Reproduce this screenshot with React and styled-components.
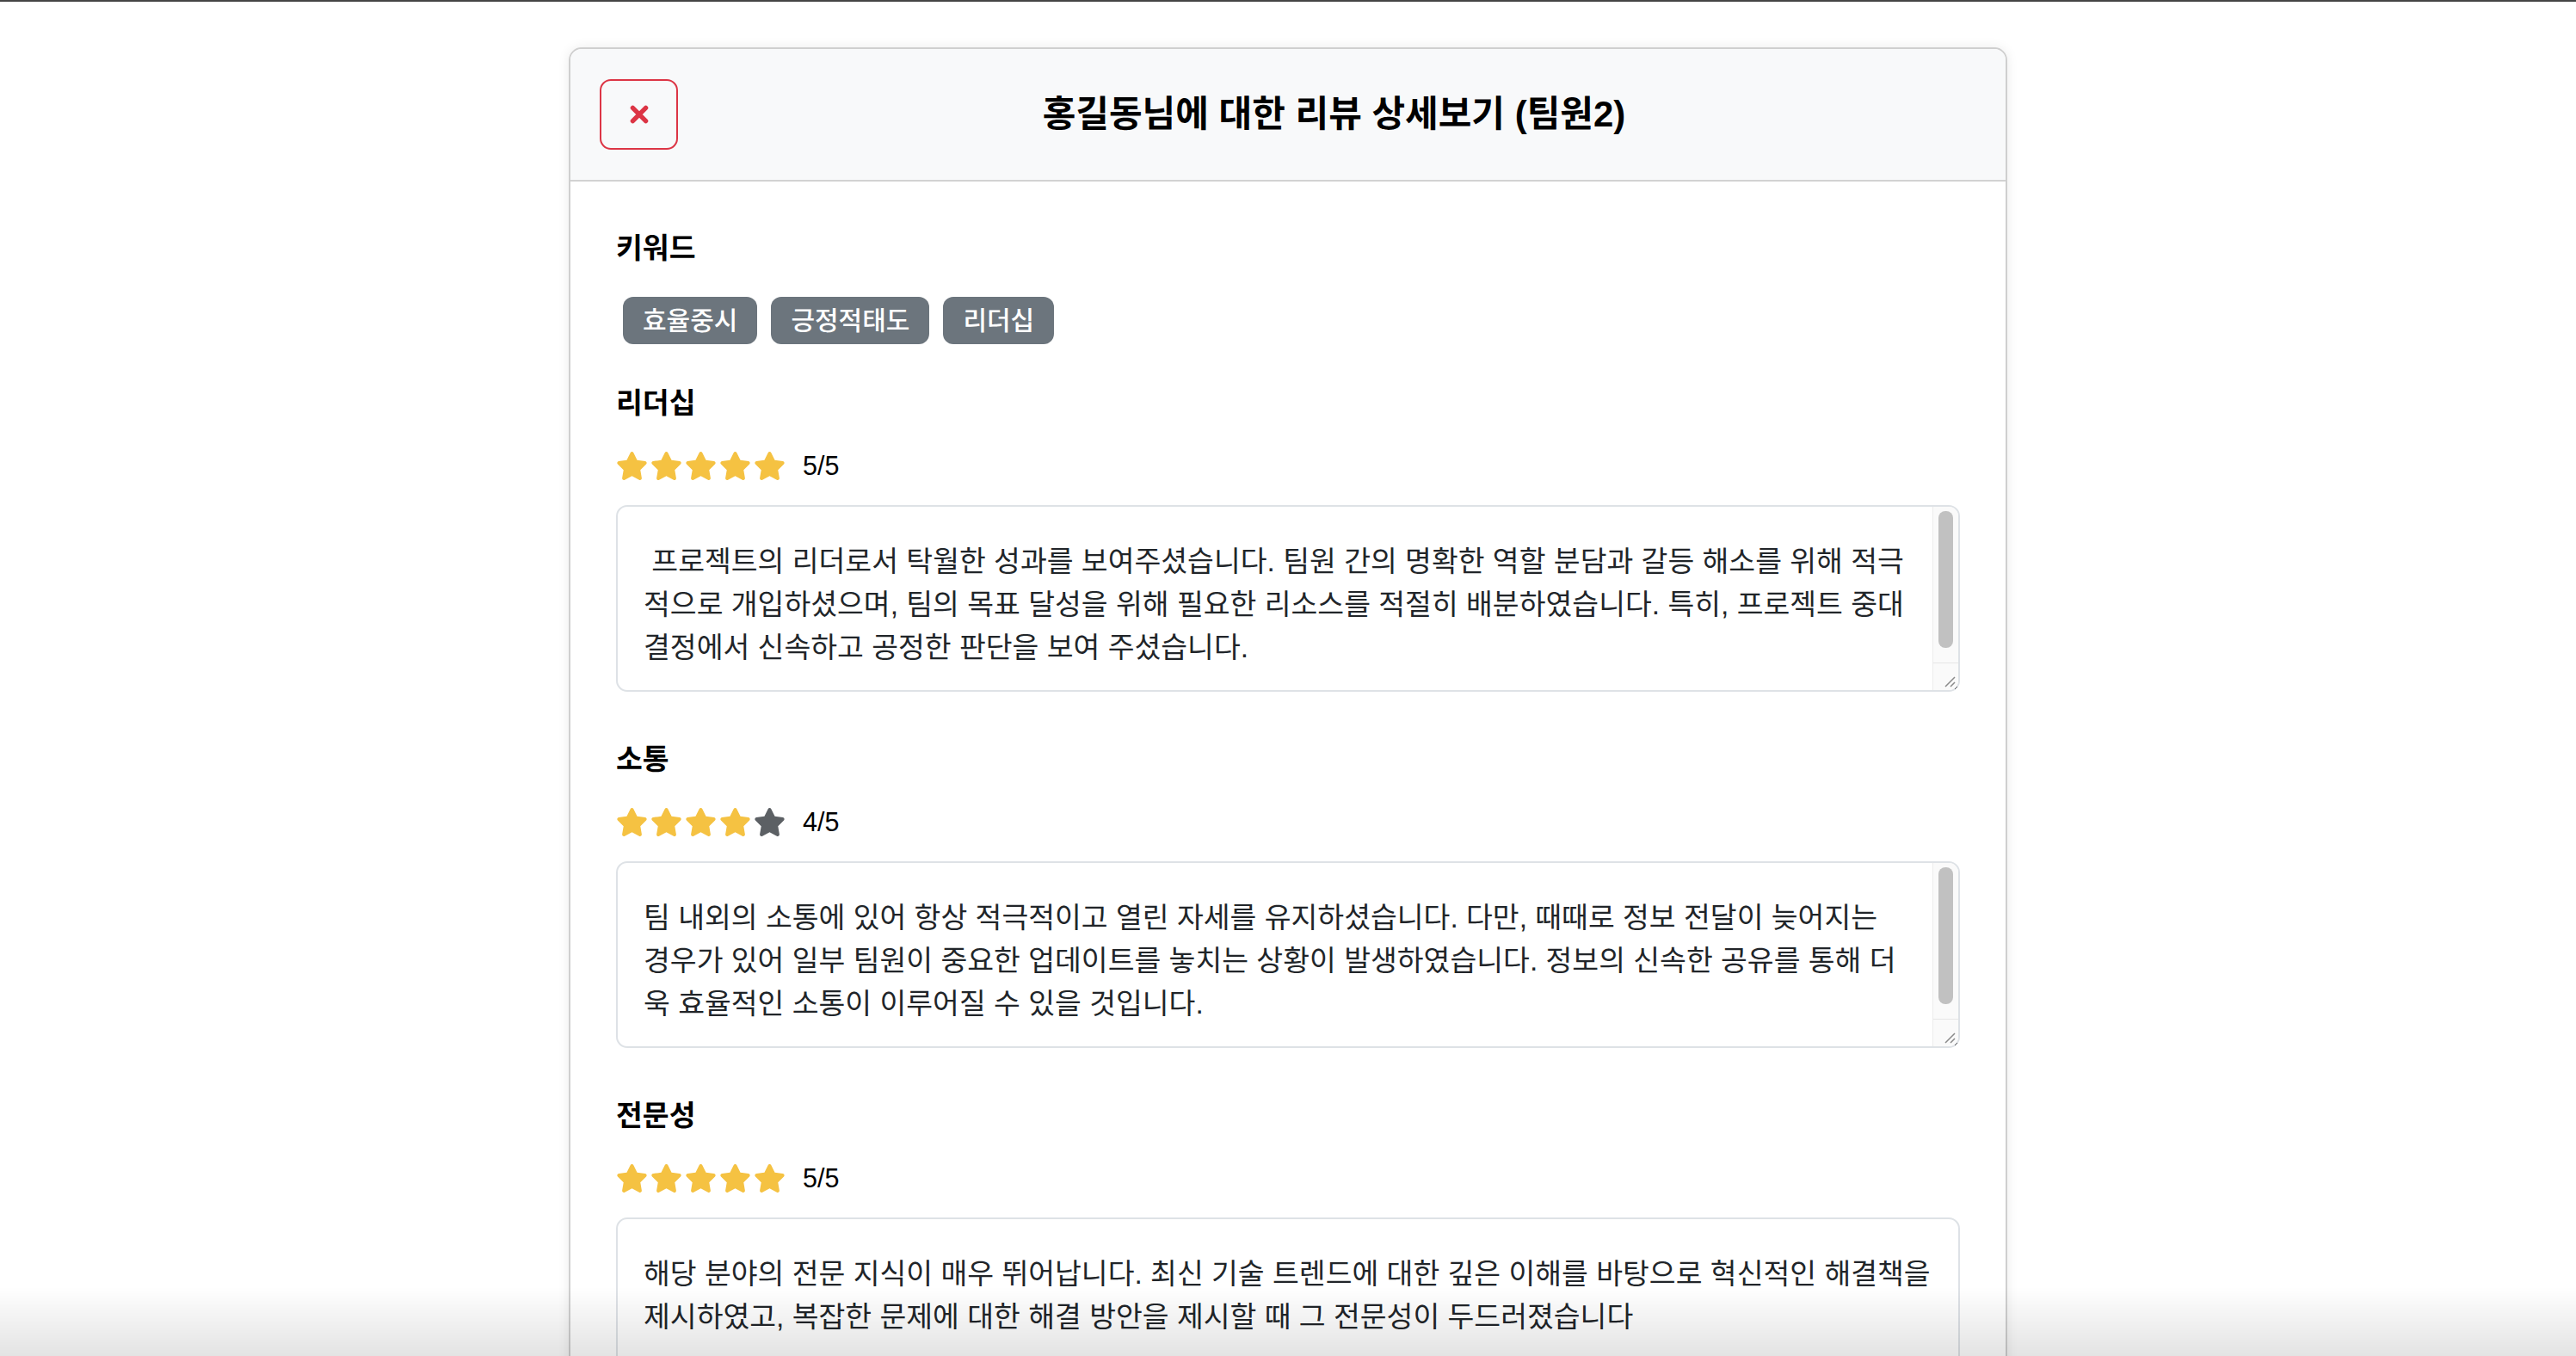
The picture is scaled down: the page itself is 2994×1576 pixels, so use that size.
import React from 'react';
import styled, { createGlobalStyle } from 'styled-components';
import { FaStar } from 'react-icons/fa';

const GlobalStyle = createGlobalStyle`
  html, body {
    margin: 0;
    padding: 0;
    background: #fff;
  }
  body {
    font-family: "Liberation Sans", "Noto Sans CJK KR", sans-serif;
    color: #212529;
    border-top: 2px solid #454545;
  }
`;

const Page = styled.div`
  display: flex;
  justify-content: center;
  padding-top: 53px;
`;

const Modal = styled.div`
  width: 1672px;
  box-sizing: border-box;
  border: 2px solid #cfcfcf;
  border-radius: 15px;
  background: #fff;
  box-shadow: 0 0 14px rgba(0, 0, 0, 0.08);
  overflow: hidden;
`;

const Header = styled.div`
  display: flex;
  align-items: center;
  padding: 35px 34px;
  background: #f8f9fa;
  border-bottom: 2px solid #d2d2d2;
`;

const CloseButton = styled.button`
  width: 91px;
  height: 82px;
  box-sizing: border-box;
  display: flex;
  align-items: center;
  justify-content: center;
  border: 2px solid #dc3545;
  border-radius: 13px;
  background: transparent;
  cursor: pointer;
  padding: 0;
`;

const Title = styled.h5`
  flex: 1;
  margin: 0;
  padding-left: 16px;
  text-align: center;
  font-size: 42px;
  font-weight: 700;
  line-height: 1.2;
  color: #000;
`;

const Body = styled.div`
  padding: 55px 53px;
`;

const Label = styled.h6`
  margin: 0 0 ${(p) => p.$gap || 26}px;
  font-size: 33.5px;
  font-weight: 700;
  line-height: 46px;
  color: #000;
`;

const BadgeRow = styled.div`
  display: flex;
  margin-bottom: 46px;
`;

const Badge = styled.span`
  display: inline-flex;
  align-items: center;
  height: 55px;
  box-sizing: border-box;
  margin: 0 8px;
  padding: 0 23px;
  border-radius: 12px;
  background: #6c757d;
  color: #fff;
  font-size: 30px;
  font-weight: 500;
  line-height: 1;
`;

const Section = styled.section`
  margin-bottom: 56px;
`;

const StarRow = styled.div`
  display: flex;
  align-items: center;
  gap: 3px;
  height: 46px;
  margin-bottom: 23px;
`;

const Score = styled.span`
  margin-left: 17px;
  font-size: 30.5px;
  color: #000;
`;

const CommentBox = styled.div`
  position: relative;
`;

const Comment = styled.textarea`
  display: block;
  width: 100%;
  height: 217px;
  box-sizing: border-box;
  margin: 0;
  padding: 39px ${(p) => (p.$scroll ? 60 : 30)}px 56px 30px;
  border: 2px solid #dee2e6;
  border-radius: 13px;
  background: #fff;
  color: #212529;
  font-family: inherit;
  font-size: 33.5px;
  line-height: 50px;
  resize: vertical;
  outline: none;
  overflow: hidden;
`;

/* scrollbar drawn over the textarea, since the headless browser hides its own */
const ScrollTrack = styled.div`
  position: absolute;
  top: 2px;
  right: 2px;
  width: 30px;
  bottom: 2px;
  display: flex;
  flex-direction: column;
  box-sizing: border-box;
  background: #fafafa;
  border-left: 1px solid #ececec;
  border-radius: 0 11px 11px 0;
  pointer-events: none;
`;

const Rail = styled.div`
  flex: 1;
  padding: 5px 6px;
`;

const Thumb = styled.div`
  height: 93%;
  border-radius: 8px;
  background: #c1c1c1;
`;

const Corner = styled.div`
  height: 28px;
  border-top: 1px solid #e6e6e6;
  display: flex;
  align-items: flex-end;
  justify-content: flex-end;
  padding: 0 3px 3px 0;
`;

const BottomFade = styled.div`
  position: fixed;
  left: 0;
  right: 0;
  bottom: 0;
  height: 80px;
  pointer-events: none;
  background: linear-gradient(to bottom, rgba(0, 0, 0, 0), rgba(0, 0, 0, 0.11));
`;

const keywords = ['효율중시', '긍정적태도', '리더십'];

const reviews = [
  {
    title: '리더십',
    score: 5,
    text:
      ' 프로젝트의 리더로서 탁월한 성과를 보여주셨습니다. 팀원 간의 명확한 역할 분담과 갈등 해소를 위해 적극\n적으로 개입하셨으며, 팀의 목표 달성을 위해 필요한 리소스를 적절히 배분하였습니다. 특히, 프로젝트 중대\n결정에서 신속하고 공정한 판단을 보여 주셨습니다.',
  },
  {
    title: '소통',
    score: 4,
    text:
      '팀 내외의 소통에 있어 항상 적극적이고 열린 자세를 유지하셨습니다. 다만, 때때로 정보 전달이 늦어지는\n경우가 있어 일부 팀원이 중요한 업데이트를 놓치는 상황이 발생하였습니다. 정보의 신속한 공유를 통해 더\n욱 효율적인 소통이 이루어질 수 있을 것입니다.',
  },
  {
    title: '전문성',
    score: 5,
    text:
      '해당 분야의 전문 지식이 매우 뛰어납니다. 최신 기술 트렌드에 대한 깊은 이해를 바탕으로 혁신적인 해결책을\n제시하였고, 복잡한 문제에 대한 해결 방안을 제시할 때 그 전문성이 두드러졌습니다',
  },
];

const CloseIcon = () => (
  <svg width="26" height="26" viewBox="0 0 24 24">
    <path d="M5 5 L19 19 M19 5 L5 19" stroke="#dc3545" strokeWidth="5" strokeLinecap="round" fill="none" />
  </svg>
);

const Grip = () => (
  <svg width="14" height="14" viewBox="0 0 14 14">
    <path d="M13 2 L2 13 M13 8 L8 13" stroke="#8a8a8a" strokeWidth="1.5" fill="none" />
  </svg>
);

const Stars = ({ score }) => (
  <StarRow>
    {[1, 2, 3, 4, 5].map((n) => (
      <FaStar key={n} size={37} color={n <= score ? '#f5c242' : '#5c6064'} />
    ))}
    <Score>{score}/5</Score>
  </StarRow>
);

const Review = ({ review }) => {
  const scrolls = review.text.split('\n').length > 2;
  return (
    <Section>
      <Label>{review.title}</Label>
      <Stars score={review.score} />
      <CommentBox>
        <Comment readOnly defaultValue={review.text} $scroll={scrolls} />
        {scrolls && (
          <ScrollTrack>
            <Rail>
              <Thumb />
            </Rail>
            <Corner>
              <Grip />
            </Corner>
          </ScrollTrack>
        )}
      </CommentBox>
    </Section>
  );
};

export default function App() {
  return (
    <>
      <GlobalStyle />
      <Page>
        <Modal>
          <Header>
            <CloseButton aria-label="닫기">
              <CloseIcon />
            </CloseButton>
            <Title>홍길동님에 대한 리뷰 상세보기 (팀원2)</Title>
          </Header>
          <Body>
            <Label $gap={33}>키워드</Label>
            <BadgeRow>
              {keywords.map((k) => (
                <Badge key={k}>{k}</Badge>
              ))}
            </BadgeRow>
            {reviews.map((r) => (
              <Review key={r.title} review={r} />
            ))}
          </Body>
        </Modal>
      </Page>
      <BottomFade />
    </>
  );
}
